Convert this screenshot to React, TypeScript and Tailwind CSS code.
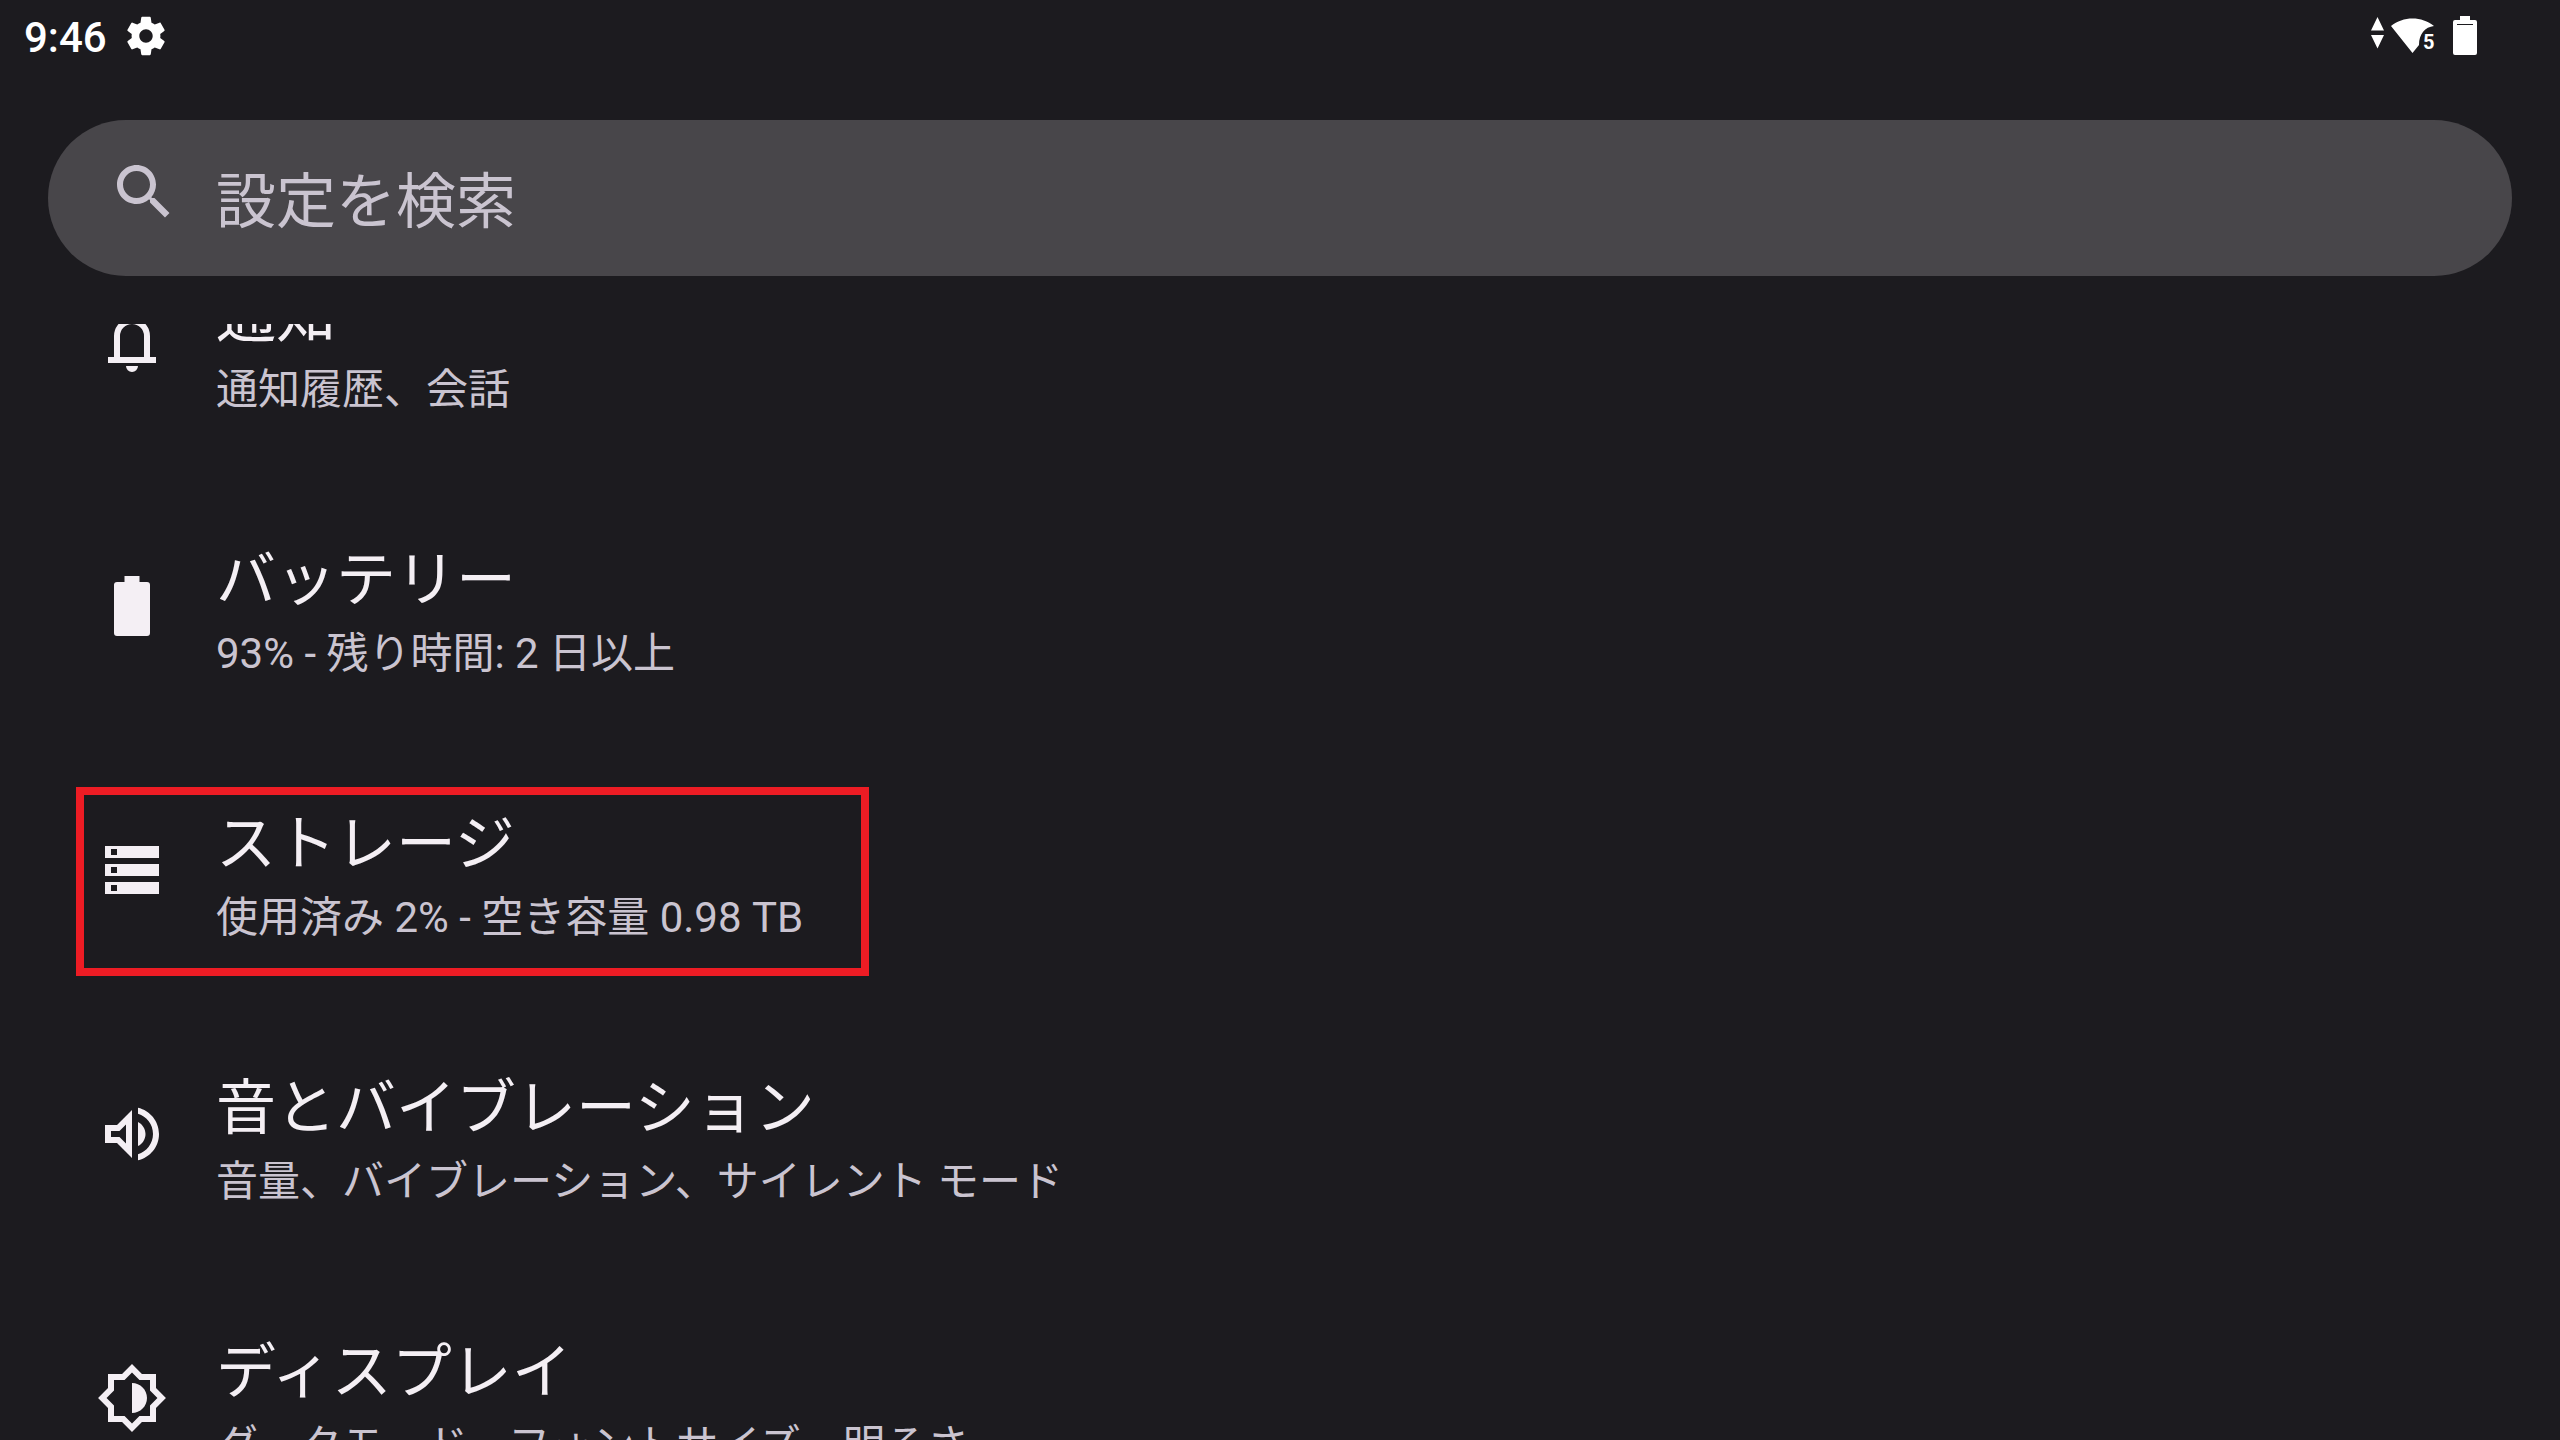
import type { ReactNode } from "react";

type SettingItem = {
  title: string;
  summary: string;
  icon: ReactNode;
  marked?: boolean;
};

function Icon({ d, className }: { d: string; className: string }) {
  return (
    <svg viewBox="0 0 24 24" className={className} fill="currentColor" aria-hidden="true">
      <path fillRule="evenodd" d={d} />
    </svg>
  );
}

const paths = {
  gear: "M19.43 12.98c.04-.32.07-.64.07-.98s-.03-.66-.07-.98l2.11-1.65c.19-.15.24-.42.12-.64l-2-3.46c-.12-.22-.39-.3-.61-.22l-2.49 1c-.52-.4-1.08-.73-1.69-.98l-.38-2.65C14.46 2.18 14.25 2 14 2h-4c-.25 0-.46.18-.49.42l-.38 2.65c-.61.25-1.17.59-1.69.98l-2.49-1c-.23-.09-.49 0-.61.22l-2 3.46c-.13.22-.07.49.12.64l2.11 1.65c-.04.32-.07.65-.07.98s.03.66.07.98l-2.11 1.65c-.19.15-.24.42-.12.64l2 3.46c.12.22.39.3.61.22l2.49-1c.52.4 1.08.73 1.69.98l.38 2.65c.03.24.24.42.49.42h4c.25 0 .46-.18.49-.42l.38-2.65c.61-.25 1.17-.59 1.69-.98l2.49 1c.23.09.49 0 .61-.22l2-3.46c.12-.22.07-.49-.12-.64l-2.11-1.65zM12 15.5c-1.93 0-3.5-1.57-3.5-3.5s1.57-3.5 3.5-3.5 3.5 1.57 3.5 3.5-1.57 3.5-3.5 3.5z",
  search:
    "M15.5 14h-.79l-.28-.27C15.41 12.59 16 11.11 16 9.5 16 5.91 13.09 3 9.5 3S3 5.91 3 9.5 5.91 16 9.5 16c1.61 0 3.09-.59 4.23-1.57l.27.28v.79l5 4.99L20.49 19l-4.99-5zm-6 0C7.01 14 5 11.99 5 9.5S7.01 5 9.5 5 14 7.01 14 9.5 11.99 14 9.5 14z",
  bell: "M4 19v-2h2v-7q0-2.075 1.25-3.687T10.5 4.2v-.7q0-.625.438-1.062T12 2t1.063.438T13.5 3.5v.7q2 .5 3.25 2.113T18 10v7h2v2zm8 3q-.825 0-1.412-.587T10 20h4q0 .825-.587 1.413T12 22m-4-5h8v-7q0-1.65-1.175-2.825T12 6T9.175 7.175T8 10z",
  battery:
    "M17 4h-2.500V2h-5v2H7a1 1 0 0 0-1 1v16a1 1 0 0 0 1 1h10a1 1 0 0 0 1-1V5a1 1 0 0 0-1-1z",
  storage:
    "M3 4h18v4H3zM5 5v2h2V5zM3 10h18v4H3zM5 11v2h2v-2zM3 16h18v4H3zM5 17v2h2v-2z",
  volume:
    "M3 9v6h4l5 5V4L7 9H3zm7-.17v6.34L7.83 13H5v-2h2.830L10 8.830zM16.500 12c0-1.770-1.020-3.290-2.500-4.030v8.050c1.480-.73 2.500-2.250 2.500-4.020zM14 3.230v2.060c2.890.86 5 3.540 5 6.710s-2.110 5.850-5 6.710v2.060c4.010-.91 7-4.490 7-8.770 0-4.280-2.990-7.860-7-8.770z",
  brightness:
    "M20 8.69V4h-4.69L12 .69 8.69 4H4v4.69L.69 12 4 15.31V20h4.69L12 23.31 15.31 20H20v-4.69L23.31 12 20 8.69zm-2 5.79V18h-3.52L12 20.48 9.52 18H6v-3.52L3.52 12 6 9.52V6h3.52L12 3.52 14.48 6H18v3.52L20.48 12 18 14.48zM12 7v10c2.76 0 5-2.24 5-5s-2.24-5-5-5z",
};

const items: SettingItem[] = [
  {
    title: "通知",
    summary: "通知履歴、会話",
    icon: <Icon d={paths.bell} className="size-[72px]" />,
  },
  {
    title: "バッテリー",
    summary: "93% - 残り時間: 2 日以上",
    icon: <Icon d={paths.battery} className="size-[72px]" />,
  },
  {
    title: "ストレージ",
    summary: "使用済み 2% - 空き容量 0.98 TB",
    icon: <Icon d={paths.storage} className="size-[72px]" />,
    marked: true,
  },
  {
    title: "音とバイブレーション",
    summary: "音量、バイブレーション、サイレント モード",
    icon: <Icon d={paths.volume} className="size-[72px]" />,
  },
  {
    title: "ディスプレイ",
    summary: "ダークモード、フォントサイズ、明るさ",
    icon: <Icon d={paths.brightness} className="size-[72px]" />,
  },
];

function StatusBar() {
  return (
    <header className="flex h-[72px] items-center justify-between pr-[83px] pl-6 text-white">
      <div className="flex items-center gap-4">
        <time className="pt-1 text-[42px] leading-none font-medium">9:46</time>
        <Icon d={paths.gear} className="size-[46px]" />
      </div>
      <div className="flex items-center gap-[18px]">
        <svg viewBox="0 0 64 38" className="h-[38px] w-16" fill="currentColor" role="img" aria-label="Wi-Fi 5">
          <path d="M0 13.500 6.500 0 13 13.500zM0 18h13L6.500 31.500z" />
          <path d="M20 9C32 -1 51 -1 63 9C54 10 48 17 48 28L41.500 36z" />
          <text x="52" y="32" fontSize="20" fontWeight="700">5</text>
        </svg>
        <svg viewBox="0 0 24 40" className="h-10 w-6" fill="currentColor" role="img" aria-label="Battery">
          <path fillRule="evenodd" d="M7 0h10v4h5a2 2 0 0 1 2 2v31a2 2 0 0 1-2 2H2a2 2 0 0 1-2-2V6a2 2 0 0 1 2-2h5zM4 8v1h16V8z" />
        </svg>
      </div>
    </header>
  );
}

function SearchBar() {
  return (
    <label className="mx-12 mt-12 flex h-[156px] items-center gap-9 rounded-full bg-[#48464a] pl-[60px] text-[#cac4d0]">
      <Icon d={paths.search} className="mb-3 size-[72px] shrink-0" />
      <input
        type="text"
        aria-label="設定を検索"
        placeholder="設定を検索"
        className="min-w-0 flex-1 bg-transparent pt-2.5 text-[60px] leading-[86px] outline-none placeholder:text-[#cac4d0]"
      />
    </label>
  );
}

function SettingRow({ item }: { item: SettingItem }) {
  return (
    <li className="relative h-[264px]">
      <a href="#" className="flex items-start gap-12 pl-24">
        <span className="mt-8 shrink-0 text-[#f4eff4]">{item.icon}</span>
        <span className="flex flex-col">
          <span className="text-[60px] leading-[86px] text-[#f4eff4]">{item.title}</span>
          <span className="text-[42px] leading-[60px] text-[#cac4d0]">{item.summary}</span>
        </span>
      </a>
      {item.marked && (
        <div className="pointer-events-none absolute -top-[15px] left-[76px] h-[189px] w-[793px] border-8 border-[#ed1c24]" />
      )}
    </li>
  );
}

export default function App() {
  return (
    <main
      lang="ja"
      className="flex h-screen flex-col overflow-hidden bg-[#1c1b1f] font-['Roboto','Noto_Sans_CJK_JP',sans-serif]"
    >
      <StatusBar />
      <SearchBar />
      <div className="mt-12 min-h-0 flex-1 overflow-hidden">
        {/* the list is scrolled part of the way into its first row */}
        <ul className="-mt-[50px]">
          {items.map((item) => (
            <SettingRow key={item.title} item={item} />
          ))}
        </ul>
      </div>
    </main>
  );
}
